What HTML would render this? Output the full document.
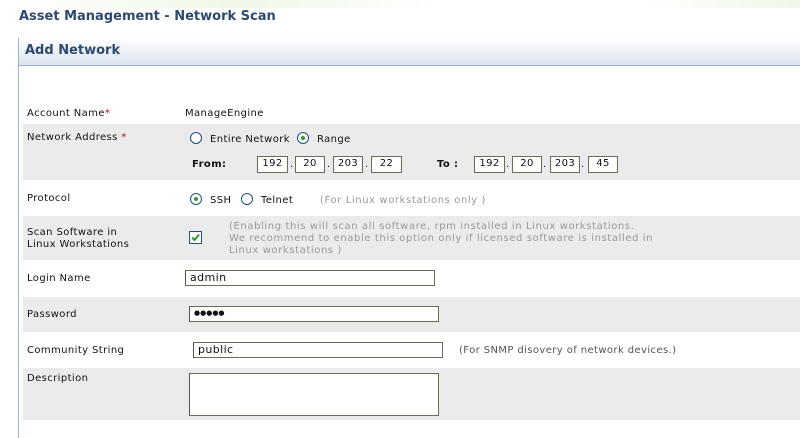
<!DOCTYPE html>
<html><head><style>
body{margin:0;width:800px;height:437px;background:#fff;position:relative;overflow:hidden;font-family:"DejaVu Sans","Liberation Sans",sans-serif;font-size:10px;color:#111;letter-spacing:0.4px}
.a{position:absolute;white-space:nowrap}
.g{position:absolute;left:23px;width:777px;background:#ebebeb}
.box{position:absolute;border:1px solid #6b6b55;background:#fff;box-sizing:border-box;font-size:10px;text-align:center;line-height:14px}
.in{position:absolute;border:1px solid #6b6b55;border-left-color:#555;background:#fff;box-sizing:border-box;font-size:11px;padding-left:4px;line-height:13px}
.r{position:absolute;width:12px;height:12px;border:1px solid #1c5180;border-radius:50%;background:#fff;box-sizing:border-box}
.r.on::after{content:"";position:absolute;left:3px;top:3px;width:4px;height:4px;border-radius:50%;background:#2c9a2c}
.h{color:#999;letter-spacing:0.6px}
.s{color:#c00}
</style></head><body>
<div class="a" style="left:0;top:0;width:800px;height:8px;background:linear-gradient(90deg,#fff,#eef8e6 30%,#fff 55%,#fff 80%,#eef8e6)"></div>
<div class="a" style="left:19px;top:9px;font-size:13px;font-weight:bold;color:#2d4a6e;letter-spacing:0">Asset Management - Network Scan</div>
<div class="a" style="left:18px;top:38px;width:782px;height:27px;background:linear-gradient(#fff,#dbe4ee);border-bottom:1px solid #9db3d6"></div>
<div class="a" style="left:18px;top:38px;width:1px;height:400px;background:#9db3d6"></div>
<div class="a" style="left:25px;top:43px;font-size:13px;font-weight:bold;color:#2d4a6e;letter-spacing:0">Add Network</div>

<div class="a" style="left:27px;top:108px">Account Name<span class="s">*</span></div>
<div class="a" style="left:185px;top:108px">ManageEngine</div>

<div class="g" style="top:124px;height:56px"></div>
<div class="a" style="left:27px;top:132px">Network Address <span class="s">*</span></div>
<div class="r" style="left:190px;top:132px"></div><div class="a" style="left:210px;top:134px">Entire Network</div>
<div class="r on" style="left:297px;top:132px"></div><div class="a" style="left:317px;top:134px">Range</div>
<div class="a" style="left:192px;top:159px;font-weight:bold">From:</div>
<div class="box" style="left:257px;top:156px;width:31px;height:17px">192</div><div class="a" style="left:290px;top:159px">.</div>
<div class="box" style="left:295px;top:156px;width:30px;height:17px">20</div><div class="a" style="left:327px;top:159px">.</div>
<div class="box" style="left:333px;top:156px;width:30px;height:17px">203</div><div class="a" style="left:365px;top:159px">.</div>
<div class="box" style="left:371px;top:156px;width:31px;height:17px">22</div>
<div class="a" style="left:437px;top:159px;font-weight:bold">To :</div>
<div class="box" style="left:474px;top:156px;width:31px;height:17px">192</div><div class="a" style="left:506px;top:159px">.</div>
<div class="box" style="left:512px;top:156px;width:30px;height:17px">20</div><div class="a" style="left:543px;top:159px">.</div>
<div class="box" style="left:550px;top:156px;width:30px;height:17px">203</div><div class="a" style="left:581px;top:159px">.</div>
<div class="box" style="left:588px;top:156px;width:30px;height:17px">45</div>

<div class="a" style="left:27px;top:193px">Protocol</div>
<div class="r on" style="left:190px;top:193px"></div><div class="a" style="left:210px;top:195px">SSH</div>
<div class="r" style="left:241px;top:193px"></div><div class="a" style="left:261px;top:195px">Telnet</div>
<div class="a h" style="left:320px;top:195px">(For Linux workstations only )</div>

<div class="g" style="top:216px;height:44px"></div>
<div class="a" style="left:27px;top:227px;line-height:12px">Scan Software in<br>Linux Workstations</div>
<svg class="a" style="left:189px;top:231px" width="13" height="13"><rect x="0.5" y="0.5" width="12" height="12" fill="#fff" stroke="#1c5180"/><path d="M3 6.5 L5.5 9 L10 3.5" stroke="#2c9a2c" stroke-width="2" fill="none"/></svg>
<div class="a h" style="left:229px;top:221px;line-height:12px">(Enabling this will scan all software, rpm installed in Linux workstations.<br>We recommend to enable this option only if licensed software is installed in<br>Linux workstations )</div>

<div class="a" style="left:27px;top:273px">Login Name</div>
<div class="in" style="left:185px;top:270px;width:250px;height:16px">admin</div>

<div class="g" style="top:297px;height:35px"></div>
<div class="a" style="left:27px;top:309px">Password</div>
<div class="in" style="left:189px;top:306px;width:250px;height:16px;font-size:7px;letter-spacing:0">●●●●●</div>

<div class="a" style="left:27px;top:345px">Community String</div>
<div class="in" style="left:193px;top:342px;width:250px;height:16px">public</div>
<div class="a" style="left:459px;top:345px;color:#555">(For SNMP disovery of network devices.)</div>

<div class="g" style="top:368px;height:52px"></div>
<div class="a" style="left:27px;top:373px">Description</div>
<div class="in" style="left:189px;top:373px;width:250px;height:43px"></div>
</body></html>
